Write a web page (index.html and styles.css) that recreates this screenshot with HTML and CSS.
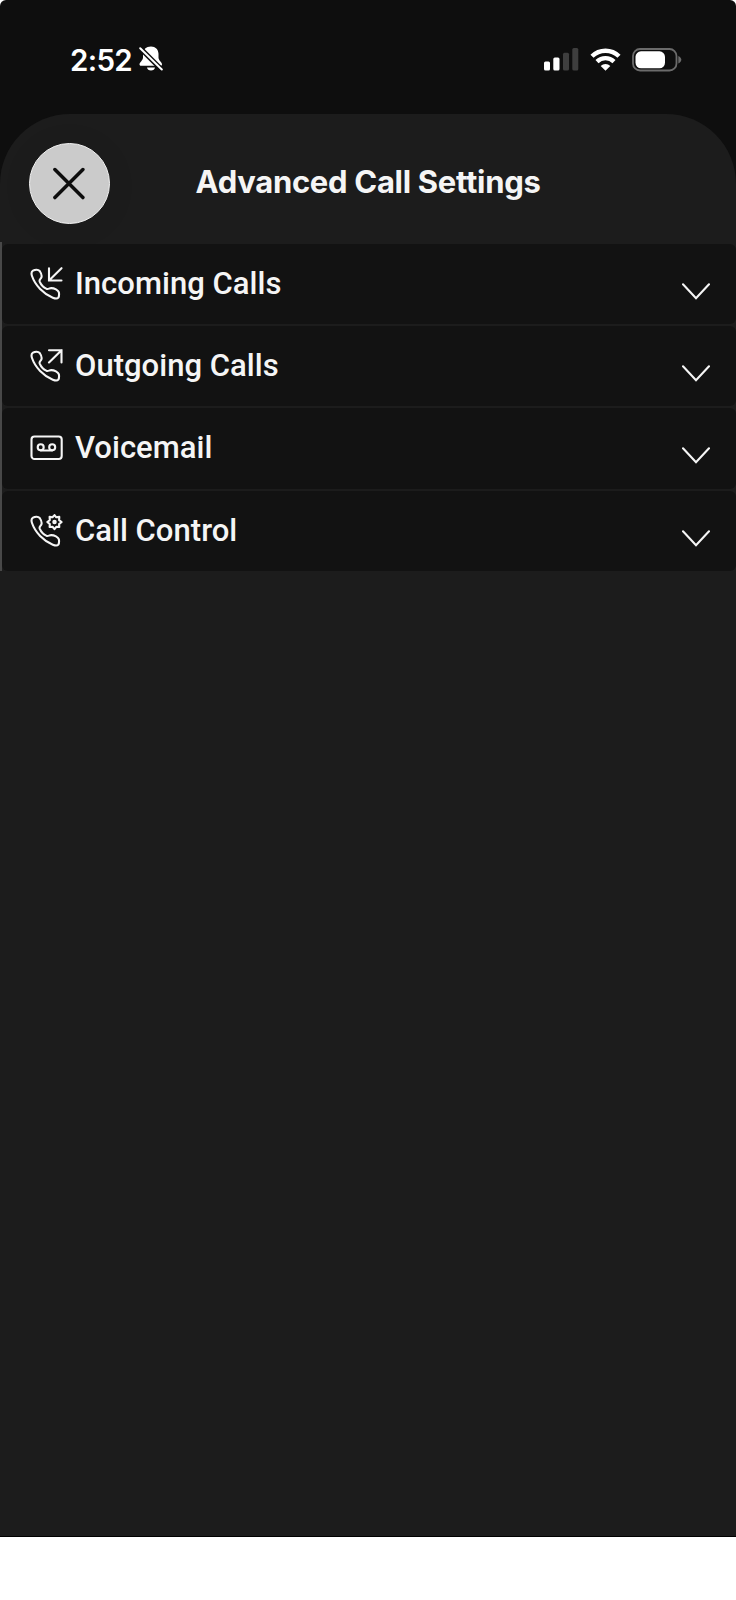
FILE: index.html
```html
<!DOCTYPE html>
<html lang="en">
<head>
<meta charset="utf-8">
<title>Advanced Call Settings</title>
<link rel="stylesheet" href="styles.css">
</head>
<body>
<div class="phone">
  <header class="status">
    <div class="status-left">
      <span class="time">2:52</span>
      <svg class="bell" width="24" height="26" viewBox="0 0 24 26">
        <path fill="#fff" d="M12 .5c4.500 0 7.300 3 7.500 7.200v3.800c0 3 3.500 4.600 3.500 6.700 0 1-.6 1.500-1.500 1.500H2c-1 0-1.600-.6-1.500-1.500C.7 16 4 14.500 4 11.500V8C4.100 3.500 7 .5 12 .5zM8 21.500h8c-.3 1.800-1.800 3-4 3s-3.700-1.200-4-3z"/>
        <path stroke="#0e0e0e" stroke-width="5" d="M1 2l22 22"/>
        <path stroke="#fff" stroke-width="2" stroke-linecap="round" d="M1.200 2.200l21.600 21.300"/>
      </svg>
    </div>
    <div class="status-right">
      <svg width="35" height="23" viewBox="0 0 35 23">
        <rect x="0" y="13.500" width="6" height="9" rx="1.500" fill="#fff"/>
        <rect x="9.300" y="9.500" width="6.200" height="13" rx="1.500" fill="#fff"/>
        <rect x="19" y="4.700" width="6" height="17.800" rx="1.500" fill="#3e3e3e"/>
        <rect x="28.300" y="0" width="6" height="22.500" rx="1.500" fill="#3e3e3e"/>
      </svg>
      <svg class="wifi" width="31" height="23" viewBox="0 0 31 23">
        <g fill="none" stroke="#fff" stroke-width="4.400">
          <path d="M2 8.300C9.500.8 21.500.8 29 8.300"/>
          <path d="M7 13.600c4.800-4.600 12.200-4.600 17 0"/>
        </g>
        <path fill="#fff" d="M15.500 22.800l-4.800-4.800c2.700-2.700 6.900-2.700 9.600 0z"/>
      </svg>
      <svg class="battery" width="50" height="24" viewBox="0 0 50 24">
        <rect x="1" y="1" width="43.500" height="21.500" rx="7" fill="none" stroke="#6b6b6b" stroke-width="1.800"/>
        <rect x="3.500" y="3.300" width="29.500" height="17" rx="5.500" fill="#fff"/>
        <path fill="#6b6b6b" d="M46.300 8c4 1.800 4 5.700 0 7.500z"/>
      </svg>
    </div>
  </header>
  <main class="sheet">
    <div class="title-bar">
      <button class="close" aria-label="Close">
        <svg width="33" height="33" viewBox="0 0 33 33"><path fill="none" stroke="#0d0d0d" stroke-width="3.500" stroke-linecap="round" d="M1.900 2.600l28 28m0-28l-28 28"/></svg>
      </button>
      <h1 class="title">Advanced Call Settings</h1>
    </div>
    <ul class="list">
      <li class="row">
        <svg class="icon" width="34" height="34" viewBox="0 0 34 34">
          <path d="M3 3.600C5 2.600 8.300 2.500 9.700 4c1.600 2.300 2.500 5.300 1.300 7.200-.9 1.200-1.900 1.700-1.300 3.400 1.200 3 3.900 5.900 7 7.300 1.700.6 2.500-.8 4.500-.8 3.200 0 7 2 7.700 4.300.3 1.900.1 4.100-.6 5.300-1 1.200-3.500.8-5.500 0C13.500 26.800 5.200 18.500 2 9 1.200 6.600 1.300 4.600 3 3.600z"/>
          <path d="M31.500 1.200L19 13.500M19 1.200v12.300h12.500"/>
        </svg>
        <span class="label">Incoming Calls</span>
        <svg class="chevron" width="28" height="17" viewBox="0 0 28 17"><path d="M1 1.300l13 14 13-14"/></svg>
      </li>
      <li class="row">
        <svg class="icon" width="34" height="34" viewBox="0 0 34 34">
          <path d="M3 3.600C5 2.600 8.300 2.500 9.700 4c1.600 2.300 2.500 5.300 1.300 7.200-.9 1.200-1.900 1.700-1.300 3.400 1.200 3 3.900 5.900 7 7.300 1.700.6 2.500-.8 4.500-.8 3.200 0 7 2 7.700 4.300.3 1.900.1 4.100-.6 5.300-1 1.200-3.500.8-5.500 0C13.500 26.800 5.200 18.500 2 9 1.200 6.600 1.300 4.600 3 3.600z"/>
          <path d="M19 13.500L31.500 1.200M19 1.200h12.500v12.300"/>
        </svg>
        <span class="label">Outgoing Calls</span>
        <svg class="chevron" width="28" height="17" viewBox="0 0 28 17"><path d="M1 1.300l13 14 13-14"/></svg>
      </li>
      <li class="row">
        <svg class="icon" width="34" height="34" viewBox="0 0 34 34">
          <rect x="1.500" y="5.500" width="30.200" height="22.500" rx="3"/>
          <circle cx="10.700" cy="16.300" r="3"/><circle cx="22.200" cy="16.300" r="3"/>
          <path d="M10.700 19.500h11.500"/>
        </svg>
        <span class="label">Voicemail</span>
        <svg class="chevron" width="28" height="17" viewBox="0 0 28 17"><path d="M1 1.300l13 14 13-14"/></svg>
      </li>
      <li class="row">
        <svg class="icon" width="34" height="34" viewBox="0 0 34 34">
          <path d="M3 3.600C5 2.600 8.300 2.500 9.700 4c1.600 2.300 2.500 5.300 1.300 7.200-.9 1.200-1.900 1.700-1.300 3.400 1.200 3 3.900 5.900 7 7.300 1.700.6 2.500-.8 4.500-.8 3.200 0 7 2 7.700 4.300.3 1.900.1 4.100-.6 5.300-1 1.200-3.500.8-5.500 0C13.500 26.800 5.200 18.500 2 9 1.200 6.600 1.300 4.600 3 3.600z"/>
          <path stroke-linejoin="round" d="M24.500 1.100L26.300 3.300L29.300 2.900L29.100 6.100L31.600 8L29.100 10.100L29.300 13L26.300 12.800L24.500 15.100L22.500 12.800L19.600 13L19.800 10.100L17.400 8L19.800 6.100L19.600 2.900L22.500 3.300Z"/>
          <circle cx="24.500" cy="8.100" r="1.200"/>
        </svg>
        <span class="label">Call Control</span>
        <svg class="chevron" width="28" height="17" viewBox="0 0 28 17"><path d="M1 1.300l13 14 13-14"/></svg>
      </li>
    </ul>
  </main>
</div>
</body>
</html>
```
FILE: styles.css
```css
* { box-sizing: border-box; }
body { margin: 0; background: #fff; font-family: Roboto, sans-serif; }
.phone {
  height: 1537px;
  display: flex;
  flex-direction: column;
  background: #0e0e0e;
  border-bottom: 1px solid #000;
  border-radius: 6px 6px 0 0;
  overflow: hidden;
}
.status {
  height: 113.500px;
  padding: 0 54px 0 70px;
  display: flex;
  justify-content: space-between;
  align-items: flex-start;
}
.status-left { display: flex; align-items: center; margin-top: 41.500px; }
.time {
  width: 69px;
  font: 600 29.500px/36px Inter, sans-serif;
  letter-spacing: -.7px;
  color: #fff;
  white-space: nowrap;
}
.bell { margin-top: -1px; }
.status-right { display: flex; align-items: center; margin-top: 47.500px; }
.wifi { margin-left: 11px; }
.battery { margin-left: 11px; }
.sheet {
  flex: 1;
  background: #1c1c1c;
  border-radius: 70px 70px 0 0;
}
.title-bar {
  height: 128px;
  padding: 15px 29px 4px;
  display: grid;
  grid-template-columns: 81px 1fr 81px;
  align-items: center;
}
.close {
  width: 81px;
  height: 81px;
  padding: 0;
  display: grid;
  place-items: center;
  background: #cbcbcb;
  border: 1.500px solid #f2f2f2;
  border-radius: 50%;
  box-shadow: 0 3px 30px rgba(0, 0, 0, .08);
}
.title {
  margin: -2px 0 0;
  text-align: center;
  white-space: nowrap;
  font: 650 31px/40px Inter, sans-serif;
  letter-spacing: -.3px;
  color: #f5f5f5;
}
.list {
  margin: 0;
  padding: 2px 0 0;
  list-style: none;
  display: grid;
  gap: 2px;
  border-left: 2px solid #484848;
}
.row {
  height: 80.400px;
  padding: 0 26px 0 28px;
  display: flex;
  align-items: center;
  background: #121212;
  border-radius: 6px;
}
.icon, .chevron {
  flex: none;
  fill: none;
  stroke: #f5f5f5;
  stroke-width: 2.100;
  stroke-linecap: round;
}
.label {
  flex: 1;
  margin-left: 11px;
  font-size: 31px;
  font-weight: 500;
  line-height: 40px;
  letter-spacing: .03px;
  color: #f5f5f5;
}
.chevron { margin-top: 15px; }
```
